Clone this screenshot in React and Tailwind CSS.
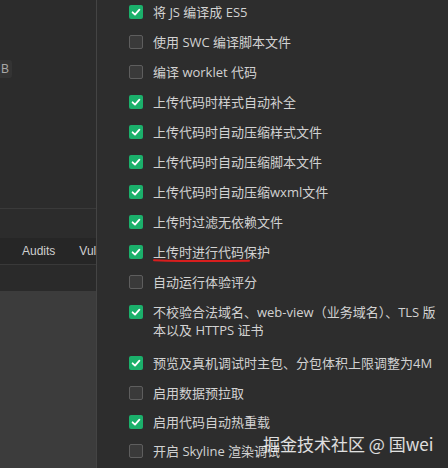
import React from "react";

const options = [
  { label: "将 JS 编译成 ES5", checked: true },
  { label: "使用 SWC 编译脚本文件", checked: false },
  { label: "编译 worklet 代码", checked: false },
  { label: "上传代码时样式自动补全", checked: true },
  { label: "上传代码时自动压缩样式文件", checked: true },
  { label: "上传代码时自动压缩脚本文件", checked: true },
  { label: "上传代码时自动压缩wxml文件", checked: true },
  { label: "上传时过滤无依赖文件", checked: true },
  { label: "上传时进行代码保护", checked: true, marked: true },
  { label: "自动运行体验评分", checked: false },
  {
    label: "不校验合法域名、web-view（业务域名）、TLS 版",
    second: "本以及 HTTPS 证书",
    checked: true,
  },
  { label: "预览及真机调试时主包、分包体积上限调整为4M", checked: true },
  { label: "启用数据预拉取", checked: false, short: true },
  { label: "启用代码自动热重载", checked: true, short: true },
  { label: "开启 Skyline 渲染调试", checked: false, short: true },
];

function Checkbox({ checked }) {
  if (checked) {
    return (
      <span className="flex h-[14px] w-[14px] shrink-0 items-center justify-center rounded-[2px] bg-[#1bb06b]">
        <svg width="14" height="14" viewBox="0 0 14 14" fill="none">
          <path
            d="M3.6 7.3 L6 9.6 L10.4 4.6"
            stroke="#ffffff"
            strokeWidth="1.8"
            strokeLinecap="round"
            strokeLinejoin="round"
          />
        </svg>
      </span>
    );
  }
  return (
    <span className="h-[14px] w-[14px] shrink-0 rounded-[2px] border border-[#5e5e5e] bg-[#3a3a3a]" />
  );
}

function OptionRow({ option }) {
  if (option.second) {
    return (
      <div className="flex h-[51px] items-start gap-[10px] pt-[6px]">
        <span className="mt-[2px]">
          <Checkbox checked={option.checked} />
        </span>
        <div className="leading-[18px]">
          <div className="whitespace-nowrap">{option.label}</div>
          <div className="whitespace-nowrap">{option.second}</div>
        </div>
      </div>
    );
  }

  return (
    <div
      className={
        option.short
          ? "flex h-[29px] items-center gap-[10px]"
          : "flex h-[30px] items-center gap-[10px]"
      }
    >
      <Checkbox checked={option.checked} />
      <span className="relative whitespace-nowrap leading-[18px]">
        {option.label}
        {/* red hand-drawn underline on the highlighted option */}
        {option.marked && (
          <svg
            className="absolute left-0 top-[15px]"
            width="98"
            height="6"
            viewBox="0 0 98 6"
            fill="none"
          >
            <path
              d="M1 2.2 Q 40 3.6 96 2.8"
              stroke="#d81e1e"
              strokeWidth="2"
              strokeLinecap="round"
            />
          </svg>
        )}
      </span>
    </div>
  );
}

export default function App() {
  return (
    <div className="relative flex h-[468px] w-[448px] overflow-hidden bg-[#2d2d2d] font-['Open_Sans','Noto_Sans_CJK_SC',sans-serif]">
      {/* Left side */}
      <div className="flex w-[96px] shrink-0 flex-col">
        <div className="h-[208px] bg-[#2c2c2c] pt-[60px]">
          <div className="flex h-[18px] w-[12px] items-center rounded-r-[3px] bg-[#343434] pl-[1px] text-[12px] text-[#a8a8a8] font-['Liberation_Sans',sans-serif]">
            B
          </div>
        </div>
        <div className="h-px bg-[#3a3a3a]" />
        <div className="h-[29px] bg-[#2c2c2c]" />
        <div className="flex h-[26px] items-center gap-[24px] bg-[#262626] pl-[22px] text-[12px] text-[#d0d0d0] font-['Liberation_Sans',sans-serif]">
          <span>Audits</span>
          <span>Vul</span>
        </div>
        <div className="h-px bg-[#393939]" />
        <div className="h-[26px] bg-[#2a2a2a]" />
        <div className="flex-1 bg-[#3c3c3c]" />
      </div>

      <div className="w-px shrink-0 bg-[#444444]" />

      {/* Right side */}
      <div className="flex-1 bg-[#2d2d2d]">
        <div className="-mt-[3px] flex flex-col pl-[32px] text-[13px] text-[#d2d2d2]">
          {options.map((option) => (
            <OptionRow key={option.label} option={option} />
          ))}
        </div>
      </div>

      {/* watermark */}
      <div className="absolute left-[263px] top-[433px] whitespace-nowrap text-[17px] leading-[22px] text-white/85 font-['Noto_Sans_CJK_SC',sans-serif]">
        掘金技术社区 @ 国wei
      </div>
    </div>
  );
}
